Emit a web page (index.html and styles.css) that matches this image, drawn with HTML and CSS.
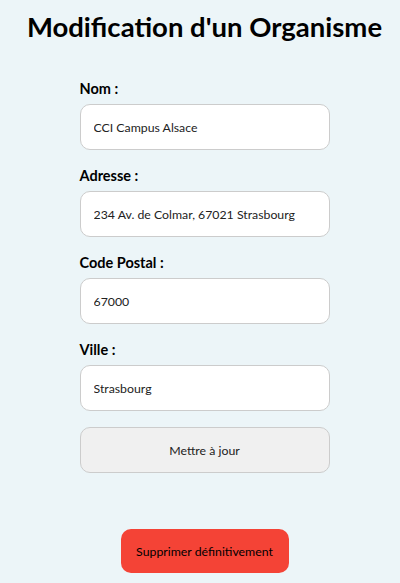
FILE: index.html
```html
<!DOCTYPE html>
<html lang="fr">
<head>
<meta charset="utf-8">
<link rel="stylesheet" href="styles.css">
</head>
<body>
<div class="page">
  <h1 class="title">Modification d'un Organisme</h1>
  <form class="form">
    <div class="field">
      <label class="label">Nom :</label>
      <input class="input" type="text" value="CCI Campus Alsace">
    </div>
    <div class="field">
      <label class="label">Adresse :</label>
      <input class="input" type="text" value="234 Av. de Colmar, 67021 Strasbourg">
    </div>
    <div class="field">
      <label class="label">Code Postal :</label>
      <input class="input" type="text" value="67000">
    </div>
    <div class="field">
      <label class="label">Ville :</label>
      <input class="input" type="text" value="Strasbourg">
    </div>
    <button class="btn-update" type="button">Mettre à jour</button>
  </form>
  <div class="danger">
    <button class="btn-delete" type="button">Supprimer définitivement</button>
  </div>
</div>
</body>
</html>
```

FILE: styles.css
```css
html, body {
  margin: 0;
  padding: 0;
  background: #ecf5f8;
}
body {
  font-family: "Lato", "Liberation Sans", sans-serif;
  color: #111;
}
.page {
  padding-left: 9px;
  display: flex;
  flex-direction: column;
  align-items: center;
}
.title {
  margin: 9px 0 0 0;
  font-size: 27.5px;
  line-height: 36px;
  font-weight: 700;
  color: #000;
  white-space: nowrap;
}
.form {
  width: 250px;
  display: flex;
  flex-direction: column;
  margin-top: 35px;
}
.field {
  display: flex;
  flex-direction: column;
  margin-bottom: 17px;
}
.field:last-of-type {
  margin-bottom: 16px;
}
.label {
  font-size: 14.5px;
  font-weight: 700;
  line-height: 18px;
  margin-bottom: 6px;
  color: #000;
}
.input {
  box-sizing: border-box;
  height: 46px;
  width: 250px;
  border: 1px solid #cccccc;
  border-radius: 10px;
  background: #fff;
  padding: 0 13px;
  font-family: "Lato", "Liberation Sans", sans-serif;
  font-size: 12.3px;
  color: #222;
  outline: none;
}
.btn-update {
  box-sizing: border-box;
  height: 46px;
  width: 250px;
  border: 1px solid #cccccc;
  border-radius: 10px;
  background: #f0f0f0;
  font-family: "Lato", "Liberation Sans", sans-serif;
  font-size: 12.3px;
  color: #222;
}
.danger {
  margin-top: 56px;
}
.btn-delete {
  box-sizing: border-box;
  height: 44px;
  width: 168px;
  border: none;
  border-radius: 10px;
  background: #f44336;
  font-family: "Lato", "Liberation Sans", sans-serif;
  font-size: 12.3px;
  color: #000;
}
```
